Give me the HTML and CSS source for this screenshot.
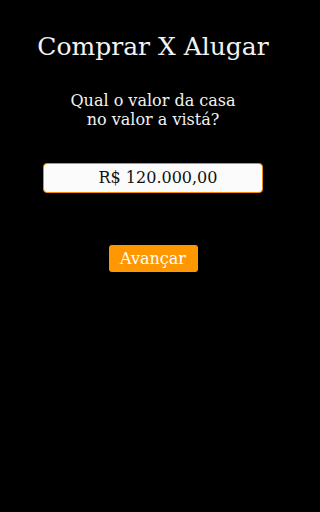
FILE: index.html
```html
<!DOCTYPE html>
<html lang="pt-BR">
<head>
<meta charset="utf-8">
<title>Comprar X Alugar</title>
<link rel="stylesheet" href="styles.css">
</head>
<body>
<main class="screen">
  <h1 class="title">Comprar X Alugar</h1>
  <p class="question">Qual o valor da casa<br>no valor a vistá?</p>
  <div class="field">R$ 120.000,00</div>
  <button class="next">Avançar</button>
</main>
</body>
</html>
```
FILE: styles.css
```css
html, body {
  margin: 0;
  padding: 0;
  background: #000;
  height: 100%;
}
.screen {
  width: 306px;
  display: flex;
  flex-direction: column;
  align-items: center;
  padding-top: 31px;
  font-family: "DejaVu Serif", "Liberation Serif", serif;
  color: #f2f2f2;
}
.title {
  margin: 0;
  font-size: 25px;
  font-weight: normal;
  line-height: 31px;
}
.question {
  margin: 29px 0 0;
  font-size: 16px;
  line-height: 19px;
  text-align: center;
}
.field {
  margin-top: 34px;
  box-sizing: border-box;
  width: 220px;
  height: 30px;
  padding-left: 10px;
  border: 1px solid #f08a00;
  border-radius: 4px;
  background: #fbfbfb;
  color: #111;
  font-size: 16px;
  line-height: 28px;
  text-align: center;
}
.next {
  margin-top: 52px;
  box-sizing: border-box;
  width: 89px;
  height: 27px;
  border: none;
  border-radius: 3px;
  background: #ff9800;
  color: #fff;
  font-family: inherit;
  font-size: 16px;
  line-height: 27px;
  padding: 0;
}
```
